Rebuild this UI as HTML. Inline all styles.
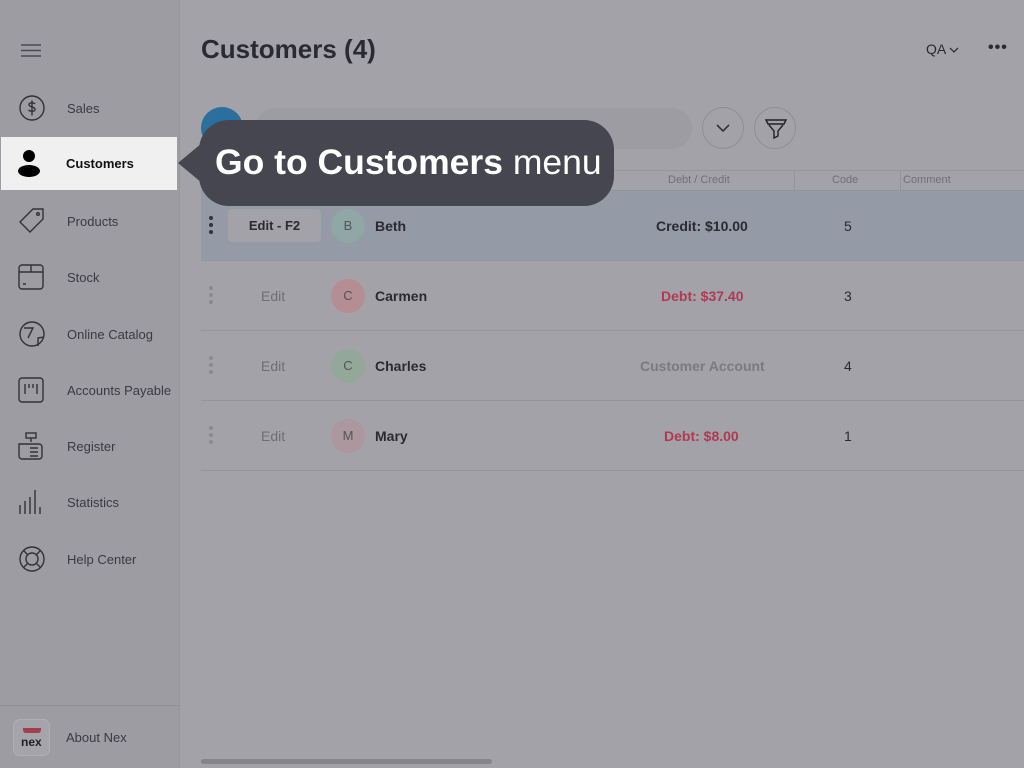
<!DOCTYPE html>
<html><head><meta charset="utf-8"><style>
*{box-sizing:border-box;margin:0;padding:0}
body{width:1024px;height:768px;overflow:hidden;background:#a3a2a8;font-family:"Liberation Sans",sans-serif;position:relative;color:#2a2a30}
.side{position:absolute;left:0;top:0;width:180px;height:768px;background:#9d9ca2;border-right:1px solid #97969c}
.item{position:absolute;left:0;width:180px;height:40px;display:flex;align-items:center;font-size:13px;color:#3a3a42}
.item svg{position:absolute;left:18px}
.item span{position:absolute;left:67px}
.sel{position:absolute;left:1px;top:137px;width:176px;height:53px;background:#f0f0f0}
.t{position:absolute;white-space:nowrap}
.row{position:absolute;left:201px;width:823px;height:70px;border-bottom:1px solid #96959b}
.av{position:absolute;width:34px;height:34px;border-radius:50%;left:331px;text-align:center;line-height:34px;font-size:13px;color:#555}
.dots{position:absolute;left:209px;width:4px}
.dots i{display:block;width:4px;height:4px;border-radius:50%;background:#8a8990;margin-bottom:3px}
</style></head><body>
<div class="side">
<svg style="position:absolute;left:21px;top:44px" width="20" height="13"><path d="M0 1h20M0 6.5h20M0 12h20" stroke="#4a4a52" stroke-width="1.5"/></svg>
<div class="item" style="top:88px"><svg width="28" height="28" viewBox="0 0 28 28" fill="none" stroke="#333" stroke-width="1.4"><circle cx="14" cy="14" r="12"/><path d="M17 10c-1-1.5-6-1.8-6 .8s6 1.6 6 4.4-5 2.5-6.5.8M14 6.5v15"/></svg><span>Sales</span></div>
<div class="sel"></div>
<div class="item" style="top:143px;color:#111;font-weight:bold"><svg width="26" height="28" viewBox="0 0 26 28"><circle cx="11" cy="7" r="6" fill="#000"/><ellipse cx="11" cy="22" rx="11" ry="6" fill="#000"/></svg><span style="left:66px">Customers</span></div>
<div class="item" style="top:201px"><svg width="28" height="28" viewBox="0 0 28 28" fill="none" stroke="#333" stroke-width="1.4"><path d="M2 15L15 2h10v10L12 25z"/><circle cx="20" cy="7" r="1.3"/></svg><span>Products</span></div>
<div class="item" style="top:257px"><svg width="26" height="26" viewBox="0 0 26 26" fill="none" stroke="#333" stroke-width="1.4"><rect x="1" y="1" width="24" height="24" rx="3"/><path d="M1 8h24M13 1v7M5 20h3"/></svg><span>Stock</span></div>
<div class="item" style="top:314px"><svg width="28" height="28" viewBox="0 0 28 28" fill="none" stroke="#333" stroke-width="1.4"><circle cx="14" cy="14" r="12"/><path d="M6 8h9l-5 10M20 26v-8l6-1"/></svg><span>Online Catalog</span></div>
<div class="item" style="top:370px"><svg width="26" height="26" viewBox="0 0 26 26" fill="none" stroke="#333" stroke-width="1.4"><rect x="1" y="1" width="24" height="24" rx="3"/><path d="M7 7v10M11 7v4M15 7v4M19 7v10"/></svg><span>Accounts Payable</span></div>
<div class="item" style="top:426px"><svg width="26" height="28" viewBox="0 0 26 28" fill="none" stroke="#333" stroke-width="1.4"><rect x="8" y="1" width="10" height="5"/><path d="M13 6v4M1 12h20a3 3 0 013 3v9a3 3 0 01-3 3H4a3 3 0 01-3-3zM12 16h8M12 20h8M12 24h8"/></svg><span>Register</span></div>
<div class="item" style="top:482px"><svg width="26" height="26" viewBox="0 0 26 26" fill="none" stroke="#333" stroke-width="1.4"><path d="M2 16v9M7 12v13M12 8v17M17 1v24M22 18v7"/></svg><span>Statistics</span></div>
<div class="item" style="top:539px"><svg width="28" height="28" viewBox="0 0 28 28" fill="none" stroke="#333" stroke-width="1.4"><circle cx="14" cy="14" r="12"/><circle cx="14" cy="14" r="6"/><path d="M6 6l4 4M22 6l-4 4M6 22l4-4M22 22l-4-4"/></svg><span>Help Center</span></div>
<div style="position:absolute;left:0;top:705px;width:180px;border-top:1px solid #919096"></div>
<div style="position:absolute;left:13px;top:719px;width:37px;height:37px;border:1px solid #b0afb5;border-radius:7px;background:#a5a4aa"><div style="position:absolute;left:9px;top:8px;width:18px;height:5px;background:#a0404c;border-radius:0 0 3px 3px"></div><div class="t" style="left:7px;top:15px;font-size:12px;font-weight:bold;color:#222">nex</div></div>
<div class="t" style="left:66px;top:730px;font-size:13px;color:#3a3a42">About Nex</div>
</div>

<div class="t" style="left:201px;top:34px;font-size:26px;font-weight:bold;color:#2a2a32">Customers (4)</div>
<div class="t" style="left:926px;top:41px;font-size:14px;color:#2a2a30">QA <svg width="10" height="7"><path d="M1 1l4 4 4-4" stroke="#333" fill="none" stroke-width="1.3"/></svg></div>
<div class="t" style="left:988px;top:39px;font-size:16px;letter-spacing:1px;font-weight:bold">•••</div>

<div style="position:absolute;left:201px;top:107px;width:42px;height:42px;border-radius:50%;background:#2a6f9e"></div>
<div style="position:absolute;left:255px;top:108px;width:437px;height:41px;border-radius:21px;background:#9d9ca2"></div>
<div style="position:absolute;left:702px;top:107px;width:42px;height:42px;border-radius:50%;border:1px solid #8f8e94"><svg style="position:absolute;left:13px;top:16px" width="14" height="9"><path d="M1 1l6 6 6-6" stroke="#333" fill="none" stroke-width="1.6"/></svg></div>
<div style="position:absolute;left:754px;top:107px;width:42px;height:42px;border-radius:50%;border:1px solid #8f8e94"><svg style="position:absolute;left:10px;top:11px" width="22" height="20"><path d="M1 1h20l-2 4H3zM4 6l5 6v7l4-2v-5l5-6" stroke="#222" fill="none" stroke-width="1.4"/></svg></div>

<div style="position:absolute;left:201px;top:170px;width:823px;height:21px;border-top:1px solid #96959b;border-bottom:1px solid #96959b"></div>
<div style="position:absolute;left:794px;top:170px;height:21px;border-left:1px solid #96959b"></div>
<div style="position:absolute;left:900px;top:170px;height:21px;border-left:1px solid #96959b"></div>
<div class="t" style="left:668px;top:174px;font-size:11px;color:#707076">Debt / Credit</div>
<div class="t" style="left:832px;top:174px;font-size:11px;color:#707076">Code</div>
<div class="t" style="left:903px;top:174px;font-size:11px;color:#707076">Comment</div>

<div class="row" style="top:191px;background:#959aa7"></div>
<div class="row" style="top:261px"></div>
<div class="row" style="top:331px"></div>
<div class="row" style="top:401px"></div>

<div class="dots" style="top:216px"><i style="background:#333"></i><i style="background:#333"></i><i style="background:#333"></i></div>
<div style="position:absolute;left:228px;top:209px;width:93px;height:33px;border-radius:4px;background:#a2a2a8;font-size:13px;font-weight:bold;text-align:center;line-height:33px;color:#2a2a30">Edit - F2</div>
<div class="av" style="top:209px;background:#8fa8a6">B</div>
<div class="t" style="left:375px;top:218px;font-size:14px;font-weight:bold">Beth</div>
<div class="t" style="left:656px;top:218px;font-size:14px;font-weight:bold">Credit: $10.00</div>
<div class="t" style="left:844px;top:218px;font-size:14px">5</div>

<div class="dots" style="top:286px"><i></i><i></i><i></i></div>
<div class="t" style="left:261px;top:288px;font-size:14px;color:#6e6e74">Edit</div>
<div class="av" style="top:279px;background:#b48e93">C</div>
<div class="t" style="left:375px;top:288px;font-size:14px;font-weight:bold">Carmen</div>
<div class="t" style="left:661px;top:288px;font-size:14px;font-weight:bold;color:#b03a50">Debt: $37.40</div>
<div class="t" style="left:844px;top:288px;font-size:14px">3</div>

<div class="dots" style="top:356px"><i></i><i></i><i></i></div>
<div class="t" style="left:261px;top:358px;font-size:14px;color:#6e6e74">Edit</div>
<div class="av" style="top:349px;background:#93a899">C</div>
<div class="t" style="left:375px;top:358px;font-size:14px;font-weight:bold">Charles</div>
<div class="t" style="left:640px;top:358px;font-size:14px;font-weight:bold;color:#7a7a80">Customer Account</div>
<div class="t" style="left:844px;top:358px;font-size:14px">4</div>

<div class="dots" style="top:426px"><i></i><i></i><i></i></div>
<div class="t" style="left:261px;top:428px;font-size:14px;color:#6e6e74">Edit</div>
<div class="av" style="top:419px;background:#ab979d">M</div>
<div class="t" style="left:375px;top:428px;font-size:14px;font-weight:bold">Mary</div>
<div class="t" style="left:664px;top:428px;font-size:14px;font-weight:bold;color:#b03a50">Debt: $8.00</div>
<div class="t" style="left:844px;top:428px;font-size:14px">1</div>

<div style="position:absolute;left:201px;top:759px;width:291px;height:5px;border-radius:3px;background:#86858b"></div>

<svg style="position:absolute;left:178px;top:138px" width="30" height="50"><path d="M30 0L0 25 30 50z" fill="#464650"/></svg>
<div style="position:absolute;left:199px;top:120px;width:415px;height:86px;border-radius:30px;background:#464650"></div>
<div class="t" style="left:215px;top:142px;font-size:35.5px;color:#fff"><b>Go to Customers</b> menu</div>
</body></html>
